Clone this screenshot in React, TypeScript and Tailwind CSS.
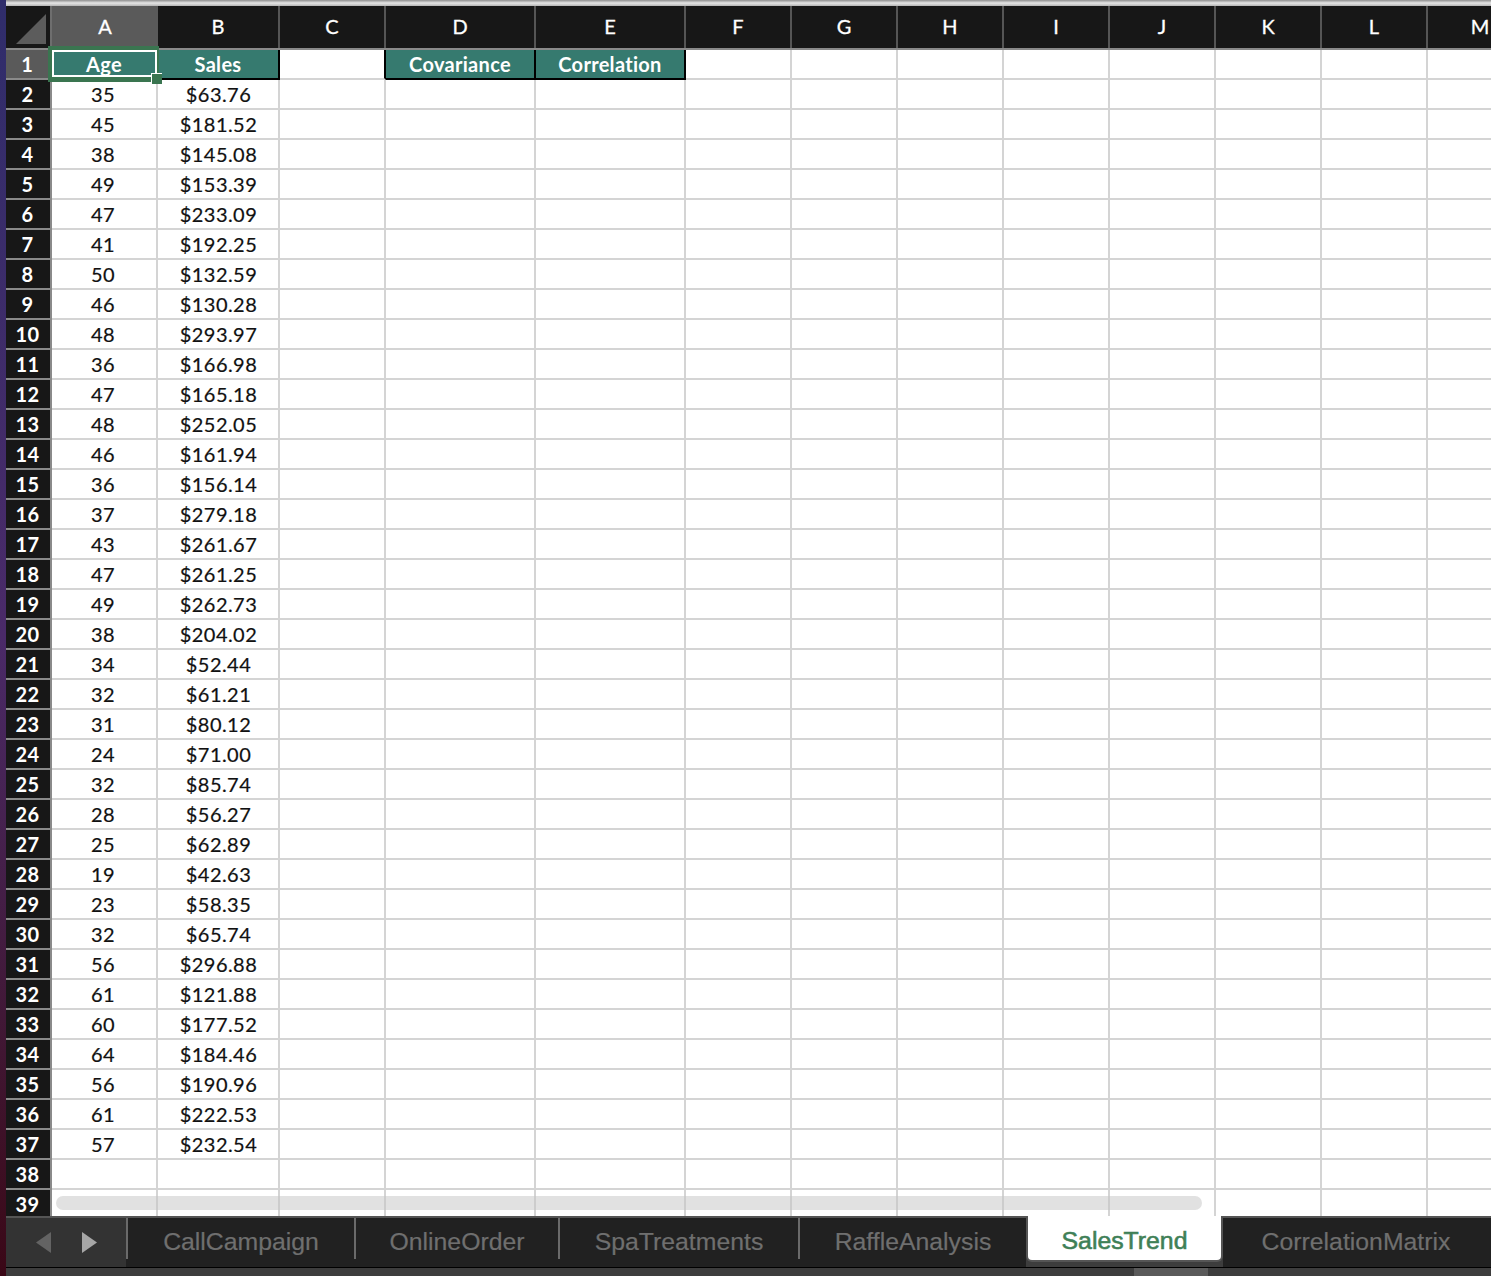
const cols = [
  { l: "A", w: 106 },
  { l: "B", w: 122 },
  { l: "C", w: 106 },
  { l: "D", w: 150 },
  { l: "E", w: 150 },
  { l: "F", w: 106 },
  { l: "G", w: 106 },
  { l: "H", w: 106 },
  { l: "I", w: 106 },
  { l: "J", w: 106 },
  { l: "K", w: 106 },
  { l: "L", w: 106 },
  { l: "M", w: 106 },
];

const data: [string, string][] = [
  ["35", "$63.76"], ["45", "$181.52"], ["38", "$145.08"], ["49", "$153.39"], ["47", "$233.09"],
  ["41", "$192.25"], ["50", "$132.59"], ["46", "$130.28"], ["48", "$293.97"], ["36", "$166.98"],
  ["47", "$165.18"], ["48", "$252.05"], ["46", "$161.94"], ["36", "$156.14"], ["37", "$279.18"],
  ["43", "$261.67"], ["47", "$261.25"], ["49", "$262.73"], ["38", "$204.02"], ["34", "$52.44"],
  ["32", "$61.21"], ["31", "$80.12"], ["24", "$71.00"], ["32", "$85.74"], ["28", "$56.27"],
  ["25", "$62.89"], ["19", "$42.63"], ["23", "$58.35"], ["32", "$65.74"], ["56", "$296.88"],
  ["61", "$121.88"], ["60", "$177.52"], ["64", "$184.46"], ["56", "$190.96"], ["61", "$222.53"],
  ["57", "$232.54"], ["", ""], ["", ""],
];

const tabs = [
  { t: "CallCampaign", w: 228 },
  { t: "OnlineOrder", w: 204 },
  { t: "SpaTreatments", w: 240 },
  { t: "RaffleAnalysis", w: 228 },
];

function GreenCell({ w, text }: { w: number; text: string }) {
  return (
    <div
      style={{ width: w }}
      className="shrink-0 h-full bg-[#367a6f] border-b-2 border-r-2 border-black flex items-center justify-center font-bold text-white text-[20px] tracking-[0.3px]"
    >
      {text}
    </div>
  );
}

function Cell({ w, text, tight }: { w: number; text?: string; tight?: boolean }) {
  return (
    <div
      style={{ width: w }}
      className={`shrink-0 h-full border-r-2 border-b-2 border-[#d4d4d4] flex items-center justify-center text-[20px] tracking-[0.45px] text-[#111] [-webkit-text-stroke:0.2px_#111] ${
        tight ? "pr-[2px]" : "pl-[1px]"
      }`}
    >
      {text}
    </div>
  );
}

export default function App() {
  return (
    <div className="w-[1491px] h-[1276px] overflow-hidden flex bg-white font-['Lato',sans-serif]">
      <div className="w-[6px] shrink-0 bg-gradient-to-b from-[#2f2d6b] via-[#4a2a68] to-[#3a0716]" />
      <div className="flex-1 min-w-0 flex flex-col">
        <div className="h-[6px] shrink-0 bg-gradient-to-b from-[#8f8f8f] via-[#e6e6e6] to-[#b5b5b5]" />
        <div className="relative h-[1210px] shrink-0 overflow-hidden">
          {/* Column headers */}
          <div className="flex h-[44px] bg-[#171717] border-b-2 border-[#8a8a8a]">
            <div className="w-[46px] shrink-0 h-full border-r-2 border-[#6e6e6e] flex items-end justify-end pr-[4px] pb-[4px]">
              <svg width="30" height="30" viewBox="0 0 30 30">
                <polygon points="30,0 30,30 0,30" fill="#5c5c5c" />
              </svg>
            </div>
            {cols.map((c) => (
              <div
                key={c.l}
                style={{ width: c.w }}
                className={`shrink-0 h-full flex items-center justify-center text-white text-[20px] pb-[2px] [-webkit-text-stroke:0.3px_#fff] ${
                  c.l === "A" ? "bg-[#5a5a5a]" : "border-r-2 border-[#555555]"
                }`}
              >
                {c.l}
              </div>
            ))}
          </div>

          {/* Header row */}
          <div className="flex h-[30px]">
            <div className="w-[46px] shrink-0 h-full bg-[#5a5a5a] border-r-2 border-b-2 border-[#8a8a8a] flex items-center justify-center text-white font-bold text-[20px] pr-[2px]">
              1
            </div>
            <GreenCell w={106} text="Age" />
            <GreenCell w={122} text="Sales" />
            <div className="w-[106px] shrink-0 h-full border-r-2 border-r-black border-b-2 border-b-[#d4d4d4]" />
            <GreenCell w={150} text="Covariance" />
            <GreenCell w={150} text="Correlation" />
            {cols.slice(5).map((c) => (
              <Cell key={c.l} w={c.w} />
            ))}
          </div>

          {/* Data rows */}
          {data.map(([a, b], i) => (
            <div key={i} className="flex h-[30px]">
              <div className="w-[46px] shrink-0 h-full bg-[#171717] border-r-2 border-b-2 border-[#8a8a8a] flex items-center justify-center text-white font-bold text-[20px] tracking-[0.4px] pr-[1px]">
                {i + 2}
              </div>
              <Cell w={106} text={a} tight />
              <Cell w={122} text={b} />
              {cols.slice(2).map((c) => (
                <Cell key={c.l} w={c.w} />
              ))}
            </div>
          ))}

          {/* Selection */}
          <div className="absolute left-[42px] top-[40px] w-[111px] h-[36px] border-l-4 border-t-4 border-r-2 border-b-[5px] border-[#3a7550] pointer-events-none">
            <div className="w-full h-full border-2 border-white" />
            <div className="absolute right-[-5px] bottom-[-7px] w-[11px] h-[11px] bg-[#3a7550] border-l border-t border-white" />
          </div>

          {/* Scrollbar */}
          <div className="absolute left-[50px] top-[1190px] w-[1146px] h-[14px] rounded-full bg-[#c4c4c4]/50" />
        </div>

        {/* Tabs */}
        <div className="flex h-[52px] shrink-0 bg-[#212121] border-t-2 border-[#555555] border-b border-b-black font-['Liberation_Sans',sans-serif] text-[24.8px] text-[#6f6f6f]">
          <div className="w-[120px] shrink-0 bg-[#333333] flex items-center pl-[30px] gap-[31px]">
            <svg width="15" height="21" viewBox="0 0 15 21">
              <polygon points="15,0 15,21 0,10.5" fill="#636363" />
            </svg>
            <svg width="15" height="21" viewBox="0 0 15 21">
              <polygon points="0,0 0,21 15,10.5" fill="#a6a6a6" />
            </svg>
          </div>
          {tabs.map((t) => (
            <div
              key={t.t}
              style={{ width: t.w }}
              className="shrink-0 h-[41px] border-l-2 border-[#6a6a6a] flex items-center justify-center self-start [-webkit-text-stroke:0.2px_#6f6f6f]"
            >
              <span className="mt-[6px]">{t.t}</span>
            </div>
          ))}
          <div className="w-[197px] shrink-0 -mt-[2px] bg-[#3d3d3d]">
            <div className="h-[46px] bg-white rounded-b-md border-l-2 border-r-2 border-b-2 border-[#555555] flex items-center justify-center pt-[5px] text-[#3f8057]">
              <span className="[-webkit-text-stroke:0.6px_#3f8057]">SalesTrend</span>
            </div>
          </div>
          <div className="flex-1 flex items-center justify-center pr-[2px] pb-[2px] [-webkit-text-stroke:0.2px_#6f6f6f]">CorrelationMatrix</div>
        </div>
        <div className="flex-1 bg-[#3d3d3d] pl-[1128px]">
          <div className="w-[74px] h-full bg-[#5a5a5a]" />
        </div>
      </div>
    </div>
  );
}
